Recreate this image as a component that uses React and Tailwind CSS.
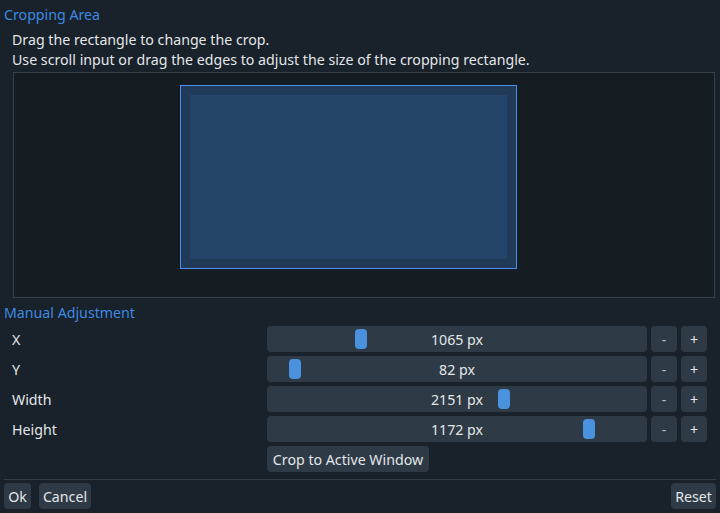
import React from "react";

function Slider({ value, pos }) {
  return (
    <div className="relative w-[380px] h-[26px] rounded-[4px] bg-[#2e3a45] flex items-center justify-center">
      <div
        className="absolute top-[3px] w-[12px] h-[20px] rounded-[4px] bg-[#4a92de]"
        style={{ left: pos }}
      />
      <span className="relative pt-px">{value}</span>
    </div>
  );
}

function Btn({ children, className = "" }) {
  return (
    <div
      className={
        "h-[26px] rounded-[4px] bg-[#2e3a45] flex items-center justify-center " +
        className
      }
    >
      <span className="pt-px">{children}</span>
    </div>
  );
}

function Row({ label, value, pos }) {
  return (
    <div className="flex items-center h-[26px]">
      <div className="w-[263px] pl-2 pt-px">{label}</div>
      <Slider value={value} pos={pos} />
      <Btn className="w-[26px] ml-[4px] text-[#b8bec4]">-</Btn>
      <Btn className="w-[26px] ml-[4px]">+</Btn>
    </div>
  );
}

export default function App() {
  return (
    <div className="w-[720px] h-[513px] bg-[#19212a] text-[#e3e6e9] text-[14.2px] leading-5 font-['Noto_Sans',sans-serif] flex flex-col px-1 pt-[5px] overflow-hidden">
      <div className="h-5 leading-5 text-[#3d8ae2]">Cropping Area</div>
      <div className="mt-[5px] pl-2 leading-5">
        <div>Drag the rectangle to change the crop.</div>
        <div>Use scroll input or drag the edges to adjust the size of the cropping rectangle.</div>
      </div>
      <div className="relative mt-[2px] ml-[9px] mr-[1px] h-[226px] bg-[#151c22] border border-[#333f49]">
        <div className="absolute left-[166px] top-[12px] w-[337px] h-[184px] bg-[#203a58] border border-[#4a8ff0] p-[9px]">
          <div className="w-full h-full bg-[#24446a]" />
        </div>
      </div>
      <div className="mt-[5px] h-5 leading-5 text-[#3d8ae2]">Manual Adjustment</div>
      <div className="mt-[3px] flex flex-col gap-[4px]">
        <Row label="X" value="1065 px" pos="88px" />
        <Row label="Y" value="82 px" pos="22px" />
        <Row label="Width" value="2151 px" pos="231px" />
        <Row label="Height" value="1172 px" pos="316px" />
        <div className="flex">
          <div className="w-[263px]" />
          <Btn className="w-[162px]">Crop to Active Window</Btn>
        </div>
      </div>
      <div className="mt-[7px] h-px bg-[#323d47]" />
      <div className="mt-[3px] flex items-center">
        <Btn className="w-[27px]">Ok</Btn>
        <Btn className="w-[52px] ml-[8px]">Cancel</Btn>
        <div className="flex-1" />
        <Btn className="w-[45px]">Reset</Btn>
      </div>
    </div>
  );
}
